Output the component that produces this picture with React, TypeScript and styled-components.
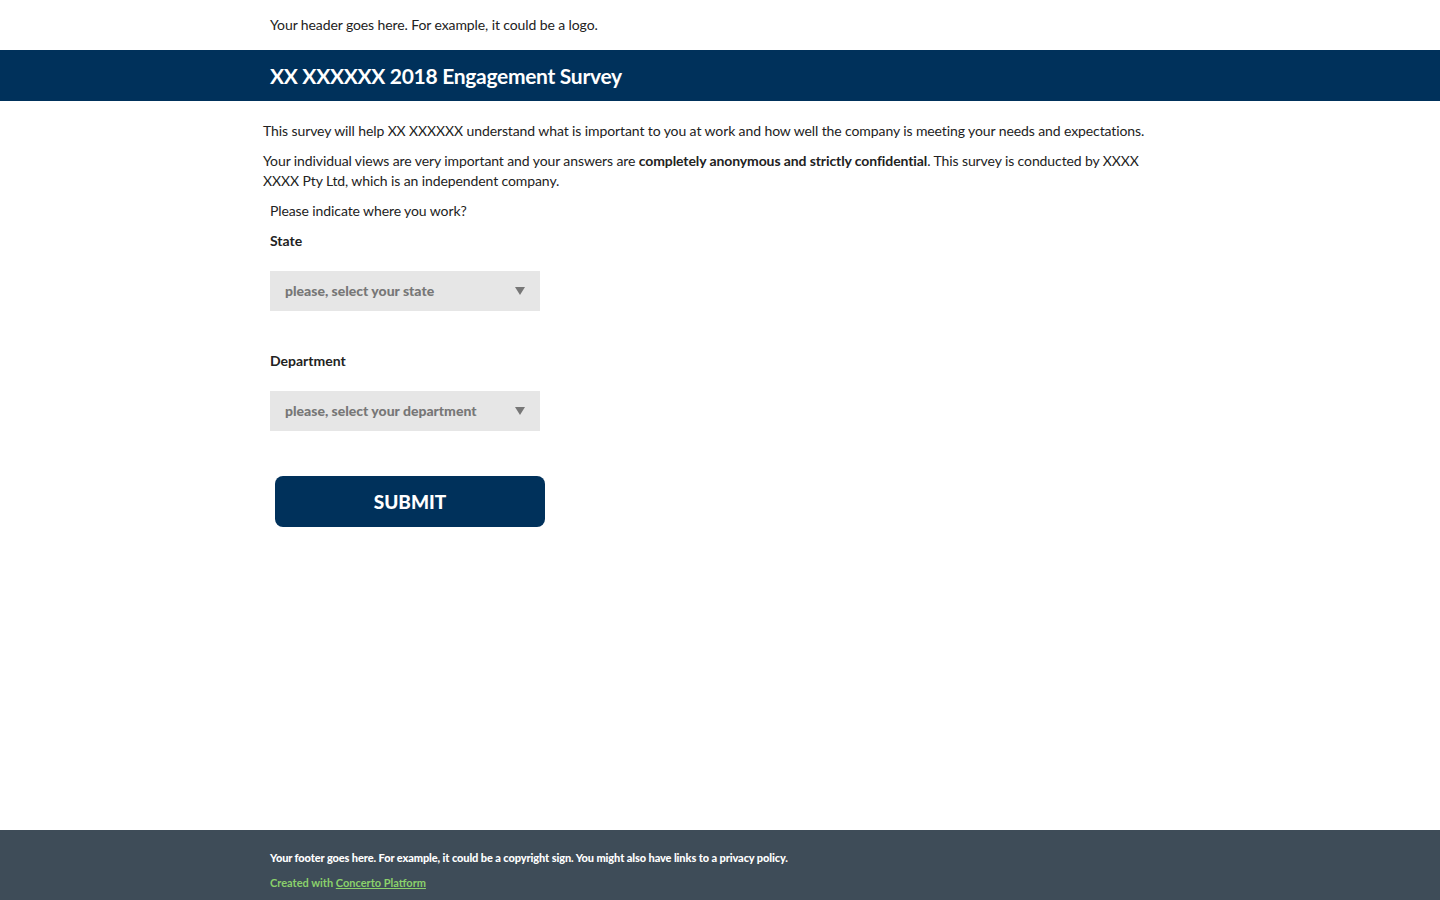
import React from "react";
import styled, { createGlobalStyle } from "styled-components";

const GlobalStyle = createGlobalStyle`
  html, body {
    margin: 0;
    padding: 0;
  }
  body {
    font-family: Lato, "Open Sans", "Liberation Sans", sans-serif;
    color: #222;
    background: #fff;
  }
  * {
    box-sizing: border-box;
  }
`;

const navy = "#00315b";

const Page = styled.div`
  display: flex;
  flex-direction: column;
  min-height: 100vh;
`;

const Header = styled.header`
  height: 50px;
  display: flex;
  align-items: center;
  padding-bottom: 1px;
`;

const Inner = styled.div`
  width: 900px;
  margin: 0 auto;
`;

const HeaderText = styled.div`
  font-size: 14px;
  color: #222;
  letter-spacing: -0.1px;
`;

const TitleBar = styled.div`
  background: ${navy};
  height: 51px;
  display: flex;
  align-items: center;
`;

const Title = styled.h1`
  margin: 0;
  font-size: 21px;
  font-weight: 700;
  color: #fff;
  letter-spacing: -0.3px;
`;

const Main = styled.main`
  flex: 1;
  width: 914px;
  margin: 0 auto;
  padding-top: 20px;
`;

const Para = styled.p`
  margin: 0 0 10px;
  font-size: 14px;
  line-height: 20px;
  color: #222;
  letter-spacing: -0.1px;

  strong {
    font-weight: 700;
  }
`;

const Form = styled.form`
  padding-left: 7px;
  display: flex;
  flex-direction: column;
`;

const Question = styled.div`
  font-size: 14px;
  line-height: 20px;
  margin-bottom: 10px;
  letter-spacing: -0.1px;
`;

const Label = styled.label`
  font-size: 14px;
  font-weight: 700;
  line-height: 20px;
  margin-bottom: 20px;
`;

const SelectWrap = styled.div`
  position: relative;
  width: 270px;
  height: 40px;
  margin-bottom: 40px;
`;

const Select = styled.select`
  appearance: none;
  -webkit-appearance: none;
  width: 100%;
  height: 100%;
  border: none;
  outline: none;
  background: #e6e6e6;
  color: #777;
  font-family: inherit;
  font-size: 14px;
  font-weight: 900;
  padding: 0 15px 1px;
  border-radius: 0;
`;

const Arrow = styled.span`
  position: absolute;
  right: 15px;
  top: 16px;
  width: 0;
  height: 0;
  border-left: 5px solid transparent;
  border-right: 5px solid transparent;
  border-top: 8px solid #777;
  pointer-events: none;
`;

const SubmitButton = styled.button`
  margin: 5px 0 0 5px;
  width: 270px;
  height: 51px;
  border: none;
  border-radius: 8px;
  background: ${navy};
  color: #fff;
  font-family: inherit;
  font-size: 19px;
  font-weight: 900;
  text-transform: uppercase;
  cursor: pointer;
`;

const Footer = styled.footer`
  background: #3e4c58;
  height: 70px;
  padding-top: 20px;
`;

const FooterText = styled.div`
  font-size: 11px;
  font-weight: 900;
  color: #fff;
  letter-spacing: -0.1px;
  line-height: 16px;
`;

const Credit = styled.div`
  margin-top: 9px;
  font-size: 11px;
  font-weight: 700;
  color: #8bd16b;
  line-height: 16px;

  a {
    color: #8bd16b;
    text-decoration: underline;
  }
`;

const Field = ({ label, placeholder }: { label: string; placeholder: string }) => (
  <>
    <Label>{label}</Label>
    <SelectWrap>
      <Select defaultValue="">
        <option value="" disabled>
          {placeholder}
        </option>
      </Select>
      <Arrow />
    </SelectWrap>
  </>
);

const App = () => {
  return (
    <Page>
      <GlobalStyle />
      <Header>
        <Inner>
          <HeaderText>Your header goes here. For example, it could be a logo.</HeaderText>
        </Inner>
      </Header>
      <TitleBar>
        <Inner>
          <Title>XX XXXXXX 2018 Engagement Survey</Title>
        </Inner>
      </TitleBar>
      <Main>
        <Para>
          This survey will help XX XXXXXX understand what is important to you at work and how well the
          company is meeting your needs and expectations.
        </Para>
        <Para>
          Your individual views are very important and your answers are{" "}
          <strong>completely anonymous and strictly confidential</strong>. This survey is conducted by
          XXXX XXXX Pty Ltd, which is an independent company.
        </Para>
        <Form onSubmit={(e) => e.preventDefault()}>
          <Question>Please indicate where you work?</Question>
          <Field label="State" placeholder="please, select your state" />
          <Field label="Department" placeholder="please, select your department" />
          <SubmitButton type="submit">Submit</SubmitButton>
        </Form>
      </Main>
      <Footer>
        <Inner>
          <FooterText>
            Your footer goes here. For example, it could be a copyright sign. You might also have links
            to a privacy policy.
          </FooterText>
          <Credit>
            Created with <a href="#">Concerto Platform</a>
          </Credit>
        </Inner>
      </Footer>
    </Page>
  );
};

export default App;
